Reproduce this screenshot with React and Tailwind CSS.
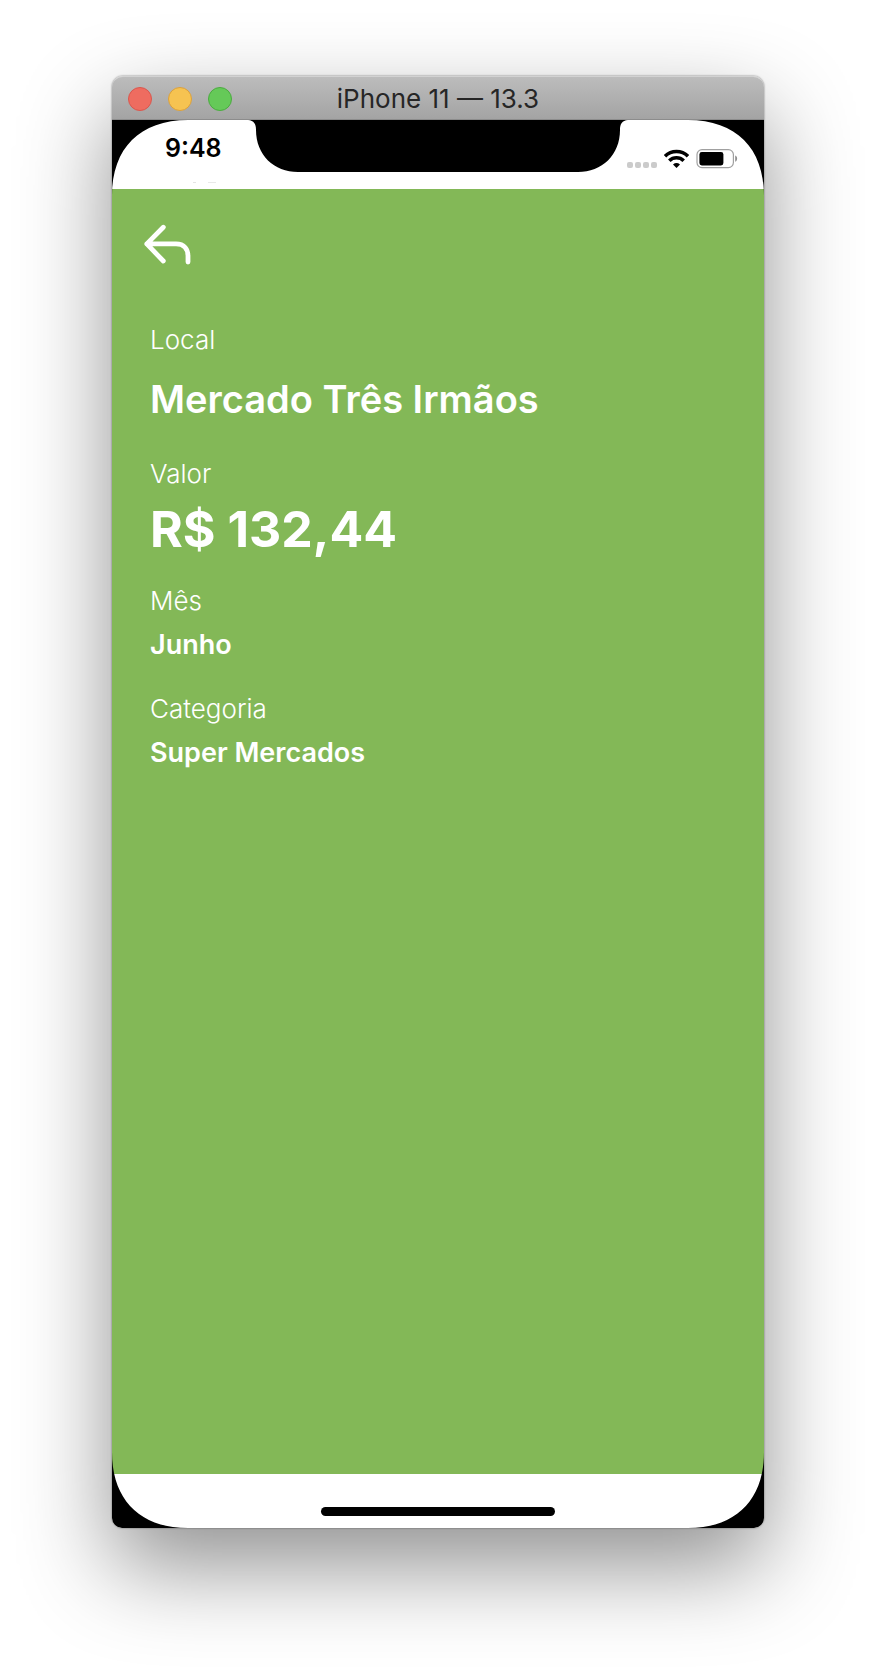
import React from "react";

const details = [
  { label: "Local", value: "Mercado Três Irmãos", style: "text-[38px] leading-[62px] font-semibold" },
  { label: "Valor", value: "R$ 132,44", style: "text-[50px] leading-[55px] font-bold" },
  { label: "Mês", value: "Junho", style: "text-[27px] leading-[32px] font-semibold pb-1" },
  { label: "Categoria", value: "Super Mercados", style: "text-[27px] leading-[32px] font-semibold" },
];

function TitleBar() {
  return (
    <header className="grid h-[44px] shrink-0 grid-cols-[1fr_auto_1fr] items-center rounded-t-[11px] border-t border-[#d2d2d2] bg-linear-to-b from-[#bcbcbc] to-[#a3a3a3] px-4 shadow-[inset_0_-1px_0_#8c8c8c]">
      <div className="flex gap-4">
        <button type="button" aria-label="Close" className="size-6 rounded-full border border-[#d9574e] bg-[#ee6c60]" />
        <button type="button" aria-label="Minimize" className="size-6 rounded-full border border-[#dba03c] bg-[#f6c351]" />
        <button type="button" aria-label="Zoom" className="size-6 rounded-full border border-[#4bab40] bg-[#65c958]" />
      </div>
      <h1 className="text-[26px] leading-[32px] text-[#262626]">iPhone 11 — 13.3</h1>
    </header>
  );
}

function Notch() {
  return (
    <svg className="absolute top-0 left-1/2 -translate-x-1/2" width="380" height="52" viewBox="0 0 380 52" aria-hidden="true">
      <path d="M0 0C6 .5 8 4 8 10C8 35 26 52 50 52H330C354 52 372 35 372 10C372 4 374 .5 380 0Z" fill="#000" />
    </svg>
  );
}

function Corner({ className }) {
  return (
    <svg className={className} width="76" height="76" viewBox="0 0 76 76" aria-hidden="true">
      <path d="M0 0H76C28 0 0 28 0 76Z" fill="#000" />
    </svg>
  );
}

function StatusIcons() {
  return (
    <svg width="112" height="22" viewBox="0 0 112 22" role="img" aria-label="No signal, Wi-Fi, battery 70%">
      <g fill="#cbcbcb">
        <rect x="0" y="14" width="6" height="6" rx="2" />
        <rect x="8" y="14" width="6" height="6" rx="2" />
        <rect x="16" y="14" width="6" height="6" rx="2" />
        <rect x="24" y="14" width="6" height="6" rx="2" />
      </g>
      <g fill="none" stroke="#000" strokeWidth="3.6">
        <path d="M38 8.2A16.5 16.5 0 0 1 61 8.2" />
        <path d="M42.3 12.7A10.3 10.3 0 0 1 56.7 12.7" />
      </g>
      <path d="M46 16.5A5.4 5.4 0 0 1 53 16.5L49.5 20Z" fill="#000" />
      <rect x="70" y="1.6" width="36.4" height="18" rx="5" fill="none" stroke="#a0a0a0" strokeWidth="1.2" />
      <rect x="72.4" y="4" width="24" height="13.4" rx="2.4" fill="#000" />
      <path d="M108.2 7.6C110.8 8.4 110.8 13 108.2 13.8Z" fill="#8f8f8f" />
    </svg>
  );
}

function StatusBar() {
  return (
    <div className="flex h-[69px] shrink-0 justify-between bg-white pr-[25px] pl-[53px]">
      <div className="flex flex-col gap-[18px] pt-3">
        <time className="text-[25px] leading-[32px] font-semibold text-black">9:48</time>
        <div className="flex gap-3 pl-7">
          <span className="h-px w-[3px] bg-[#e4e4e4]" />
          <span className="h-px w-2 bg-[#e9e9e9]" />
        </div>
      </div>
      <div className="pt-7">
        <StatusIcons />
      </div>
    </div>
  );
}

export default function App() {
  return (
    <div className="flex min-h-screen flex-col bg-white px-28 pt-[76px] pb-[148px] font-['Inter','Liberation_Sans',sans-serif]">
      <div className="flex flex-1 flex-col rounded-[11px] shadow-[0_0_2px_rgba(0,0,0,0.55),0_38px_92px_rgba(0,0,0,0.44)]">
        <TitleBar />
        <div className="relative flex flex-1 flex-col overflow-hidden rounded-b-[10px] bg-white">
          <StatusBar />
          <main className="flex flex-1 flex-col bg-[#83b857] px-[38px] pt-8 text-white">
            <button type="button" aria-label="Voltar" className="-ml-2 h-[46px] w-[52px]">
              <svg width="52" height="46" viewBox="0 0 52 46" fill="none" stroke="currentColor" strokeWidth="4.8" strokeLinecap="round" strokeLinejoin="round" aria-hidden="true">
                <path d="M21.3 6.3L4.8 22.9L21.3 40M4.800 22.900H34C42.500 22.900 46 28.500 46 35V41" />
              </svg>
            </button>
            <dl className="mt-[57px] flex flex-col gap-7">
              {details.map((item) => (
                <div key={item.label} className="flex flex-col gap-3">
                  <dt className="text-[26px] leading-[32px] font-light">{item.label}</dt>
                  <dd className={item.style}>{item.value}</dd>
                </div>
              ))}
            </dl>
          </main>
          <footer className="flex h-[54px] shrink-0 items-end justify-center bg-white pb-3">
            <div className="h-[9px] w-[36%] rounded-full bg-black" />
          </footer>
          <Notch />
          <Corner className="absolute top-0 left-0" />
          <Corner className="absolute top-0 right-0 rotate-90" />
          <Corner className="absolute right-0 bottom-0 rotate-180" />
          <Corner className="absolute bottom-0 left-0 -rotate-90" />
        </div>
      </div>
    </div>
  );
}
